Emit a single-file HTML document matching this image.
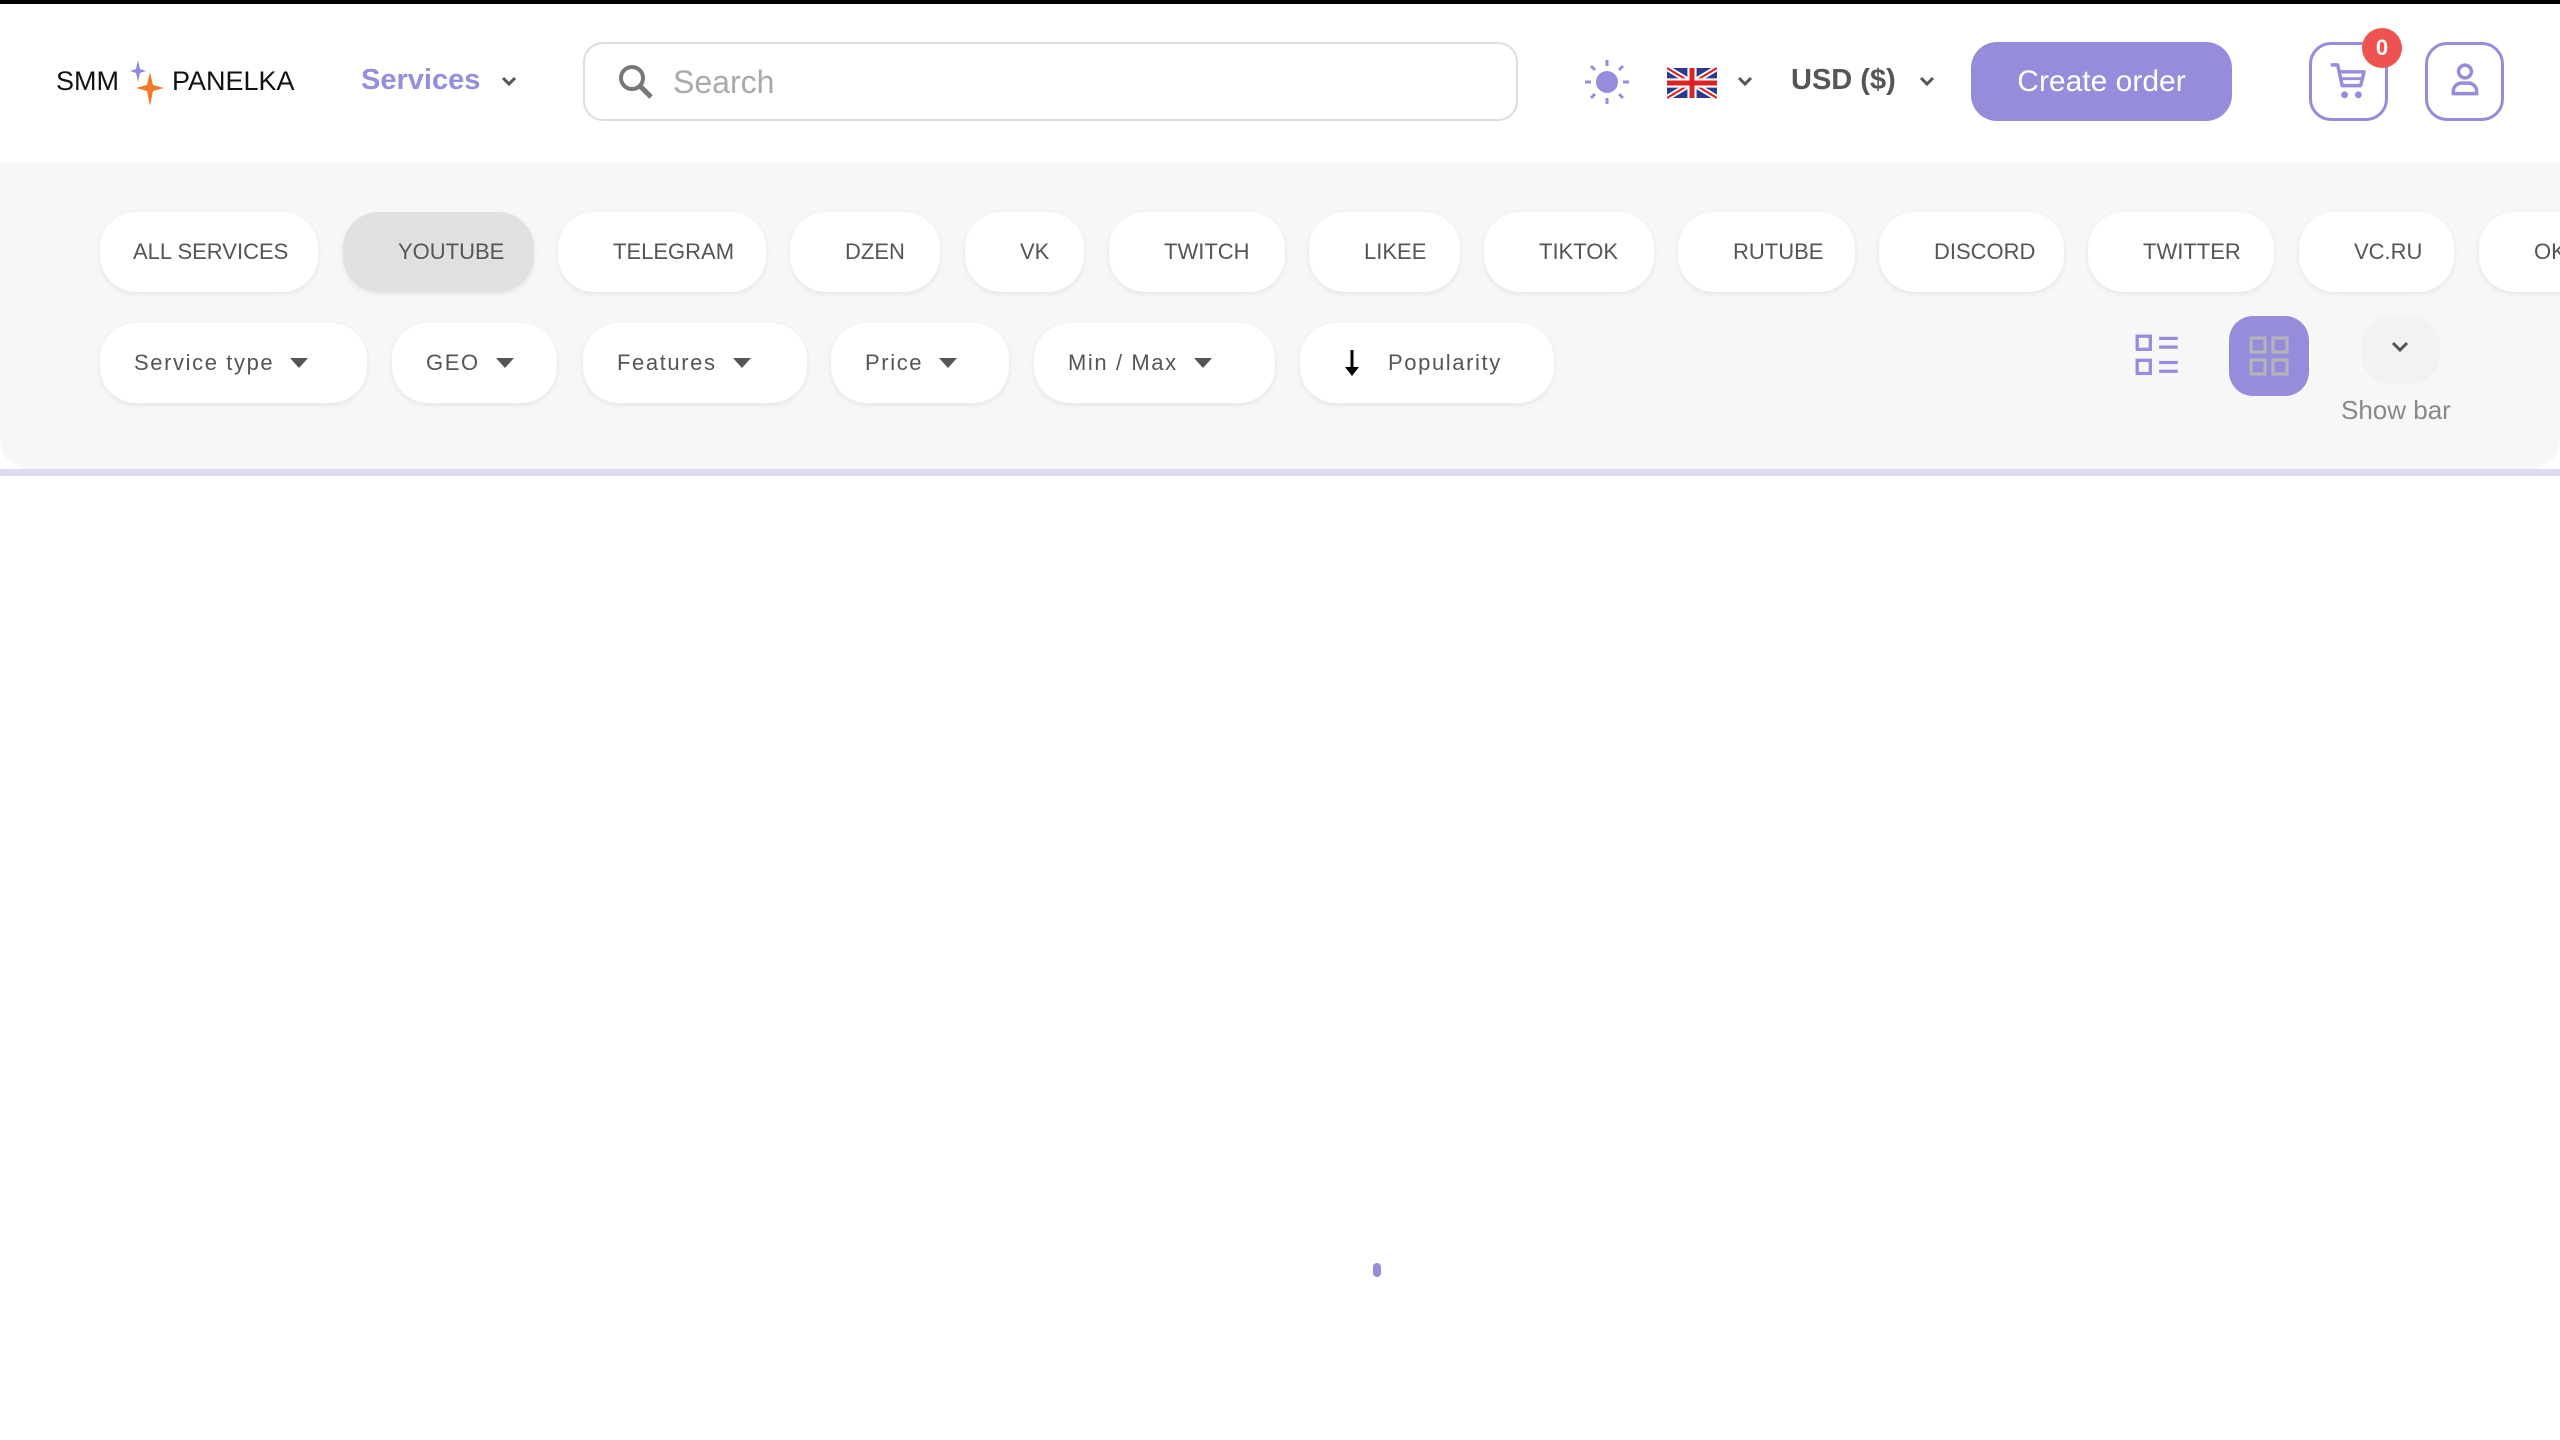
<!DOCTYPE html>
<html><head><meta charset="utf-8"><style>
*{box-sizing:border-box;margin:0;padding:0}
body{width:2560px;height:1440px;background:#fff;font-family:"Liberation Sans",Arial,sans-serif;position:relative;overflow:hidden}
.abs{position:absolute}
.topbar{left:0;top:0;width:2560px;height:4px;background:#000}
.panel{left:0;top:163px;width:2560px;height:306px;background:#f7f7f7;border-radius:0 0 30px 30px}
.line{left:0;top:469px;width:2560px;height:7px;background:#dedaf2}
.chip{position:absolute;height:80px;background:#fff;border-radius:36px;box-shadow:0 2px 6px rgba(0,0,0,.08);font-size:22px;color:#555;display:flex;align-items:center;white-space:nowrap}
.r1{top:212px;padding-left:55px}
.r2{top:323px;padding-left:34px;letter-spacing:1.6px}
.tri{display:inline-block;width:0;height:0;border-left:9px solid transparent;border-right:9px solid transparent;border-top:10px solid #555;margin-left:16px}
</style></head><body>
<div class="abs topbar"></div>
<div class="abs" style="left:56px;top:66px;font-size:27px;color:#111">SMM</div>
<svg class="abs" style="left:124px;top:58px" width="46" height="50" viewBox="0 0 46 50">
<path d="M14 2 L16 11 L22 13 L16 15 L14 24 L12 15 L6 13 L12 11Z" fill="#8f88e0"/>
<path d="M26 14 L29 27 L40 30 L29 33 L26 48 L23 33 L12 30 L23 27Z" fill="#f47a2a"/>
</svg>
<div class="abs" style="left:172px;top:66px;font-size:27px;color:#111">PANELKA</div>
<div class="abs" style="left:361px;top:64px;font-size:29px;color:#958ddd;font-weight:bold">Services</div>
<svg class="abs" style="left:500px;top:75px" width="18" height="14" viewBox="0 0 18 14"><path d="M3 3 L9 9 L15 3" stroke="#555" stroke-width="3" fill="none"/></svg>
<div class="abs" style="left:583px;top:42px;width:935px;height:79px;border:2px solid #ddd;border-radius:20px"></div>
<svg class="abs" style="left:616px;top:62px" width="40" height="40" viewBox="0 0 40 40"><circle cx="16" cy="16" r="11" stroke="#777" stroke-width="4" fill="none"/><path d="M24 24 L35 35" stroke="#777" stroke-width="5"/></svg>
<div class="abs" style="left:673px;top:64px;font-size:32px;color:#aaa">Search</div>
<svg class="abs" style="left:1582px;top:57px" width="50" height="50" viewBox="0 0 50 50"><circle cx="25" cy="25" r="11" fill="#958ddd"/><g stroke="#958ddd" stroke-width="3"><path d="M25 3v6M25 41v6M3 25h6M41 25h6M9 9l4 4M37 37l4 4M9 41l4-4M37 13l4-4"/></g></svg>
<svg class="abs" style="left:1667px;top:65px" width="50" height="36" viewBox="0 0 60 36"><rect width="60" height="36" fill="#2b3a8c"/><path d="M0 0L60 36M60 0L0 36" stroke="#fff" stroke-width="7"/><path d="M0 0L60 36M60 0L0 36" stroke="#d22" stroke-width="2.5"/><path d="M30 0v36M0 18h60" stroke="#fff" stroke-width="11"/><path d="M30 0v36M0 18h60" stroke="#d22" stroke-width="6"/></svg>
<svg class="abs" style="left:1736px;top:75px" width="18" height="14" viewBox="0 0 18 14"><path d="M3 3 L9 9 L15 3" stroke="#555" stroke-width="3" fill="none"/></svg>
<div class="abs" style="left:1791px;top:64px;font-size:29px;color:#555;font-weight:bold">USD ($)</div>
<svg class="abs" style="left:1918px;top:75px" width="18" height="14" viewBox="0 0 18 14"><path d="M3 3 L9 9 L15 3" stroke="#555" stroke-width="3" fill="none"/></svg>
<div class="abs" style="left:1971px;top:42px;width:261px;height:79px;background:#958ddb;border-radius:26px;color:#fff;font-size:30px;display:flex;align-items:center;justify-content:center">Create order</div>
<div class="abs" style="left:2309px;top:42px;width:79px;height:79px;border:3px solid #958ddb;border-radius:22px"></div>
<svg class="abs" style="left:2325px;top:58px" width="46" height="46" viewBox="0 0 40 40"><path d="M5 6h6l4 18h16l3-12H13" stroke="#958ddb" stroke-width="3" fill="none" stroke-linejoin="round"/><path d="M15 18h17" stroke="#958ddb" stroke-width="2.5"/><circle cx="17" cy="32" r="3" fill="#958ddb"/><circle cx="29" cy="32" r="3" fill="#958ddb"/></svg>
<div class="abs" style="left:2362px;top:28px;width:40px;height:40px;border-radius:50%;background:#ef5350;color:#fff;font-size:22px;font-weight:bold;display:flex;align-items:center;justify-content:center">0</div>
<div class="abs" style="left:2425px;top:42px;width:79px;height:79px;border:3px solid #958ddb;border-radius:22px"></div>
<svg class="abs" style="left:2446px;top:61px" width="38" height="42" viewBox="0 0 32 36"><circle cx="16" cy="9" r="5.5" stroke="#958ddb" stroke-width="3" fill="none"/><path d="M6 28v-2a7 7 0 0 1 7-7h6a7 7 0 0 1 7 7v2z" stroke="#958ddb" stroke-width="3" fill="none"/></svg>
<div class="abs panel"></div>
<div class="abs line"></div>
<div class="chip r1" style="left:100px;width:218px;padding-left:33px">ALL SERVICES</div>
<div class="chip r1" style="left:343px;width:191px;background:#e0e0e0">YOUTUBE</div>
<div class="chip r1" style="left:558px;width:208px">TELEGRAM</div>
<div class="chip r1" style="left:790px;width:150px">DZEN</div>
<div class="chip r1" style="left:965px;width:119px">VK</div>
<div class="chip r1" style="left:1109px;width:176px">TWITCH</div>
<div class="chip r1" style="left:1309px;width:151px">LIKEE</div>
<div class="chip r1" style="left:1484px;width:170px">TIKTOK</div>
<div class="chip r1" style="left:1678px;width:177px">RUTUBE</div>
<div class="chip r1" style="left:1879px;width:185px">DISCORD</div>
<div class="chip r1" style="left:2088px;width:186px">TWITTER</div>
<div class="chip r1" style="left:2299px;width:155px">VC.RU</div>
<div class="chip r1" style="left:2479px;width:150px">OK</div>
<div class="chip r2" style="left:100px;width:267px">Service type<span class="tri"></span></div>
<div class="chip r2" style="left:392px;width:165px">GEO<span class="tri"></span></div>
<div class="chip r2" style="left:583px;width:224px">Features<span class="tri"></span></div>
<div class="chip r2" style="left:831px;width:178px">Price<span class="tri"></span></div>
<div class="chip r2" style="left:1034px;width:241px">Min / Max<span class="tri"></span></div>
<div class="chip r2" style="left:1300px;width:254px;padding-left:42px"><svg width="20" height="30" viewBox="0 0 20 30" style="margin-right:26px"><path d="M10 2v22" stroke="#000" stroke-width="3"/><path d="M3 19l7 9 7-9z" fill="#000"/></svg>Popularity</div>
<svg class="abs" style="left:2135px;top:334px" width="46" height="46" viewBox="0 0 42 42"><g stroke="#958ddb" stroke-width="3" fill="none"><rect x="2" y="2" width="12" height="12"/><rect x="2" y="24" width="12" height="12"/></g><g stroke="#958ddb" stroke-width="3"><path d="M22 4h17M22 12h17M22 26h17M22 34h17"/></g></svg>
<div class="abs" style="left:2229px;top:316px;width:80px;height:80px;background:#958ddb;border-radius:24px"></div>
<svg class="abs" style="left:2249px;top:336px" width="40" height="40" viewBox="0 0 40 40"><g stroke="#b5b5b5" stroke-width="3" fill="none"><rect x="2" y="2" width="14" height="14"/><rect x="24" y="2" width="14" height="14"/><rect x="2" y="24" width="14" height="14"/><rect x="24" y="24" width="14" height="14"/></g></svg>
<div class="abs" style="left:2361px;top:316px;width:79px;height:68px;background:#f2f2f2;border-radius:30px"></div>
<svg class="abs" style="left:2390px;top:340px" width="20" height="14" viewBox="0 0 20 14"><path d="M3 3 L10 10 L17 3" stroke="#555" stroke-width="3" fill="none"/></svg>
<div class="abs" style="left:2341px;top:395px;font-size:26px;color:#888">Show bar</div>
<div class="abs" style="left:1373px;top:1263px;width:8px;height:14px;border-radius:4px;background:#958ddb"></div>
</body></html>
